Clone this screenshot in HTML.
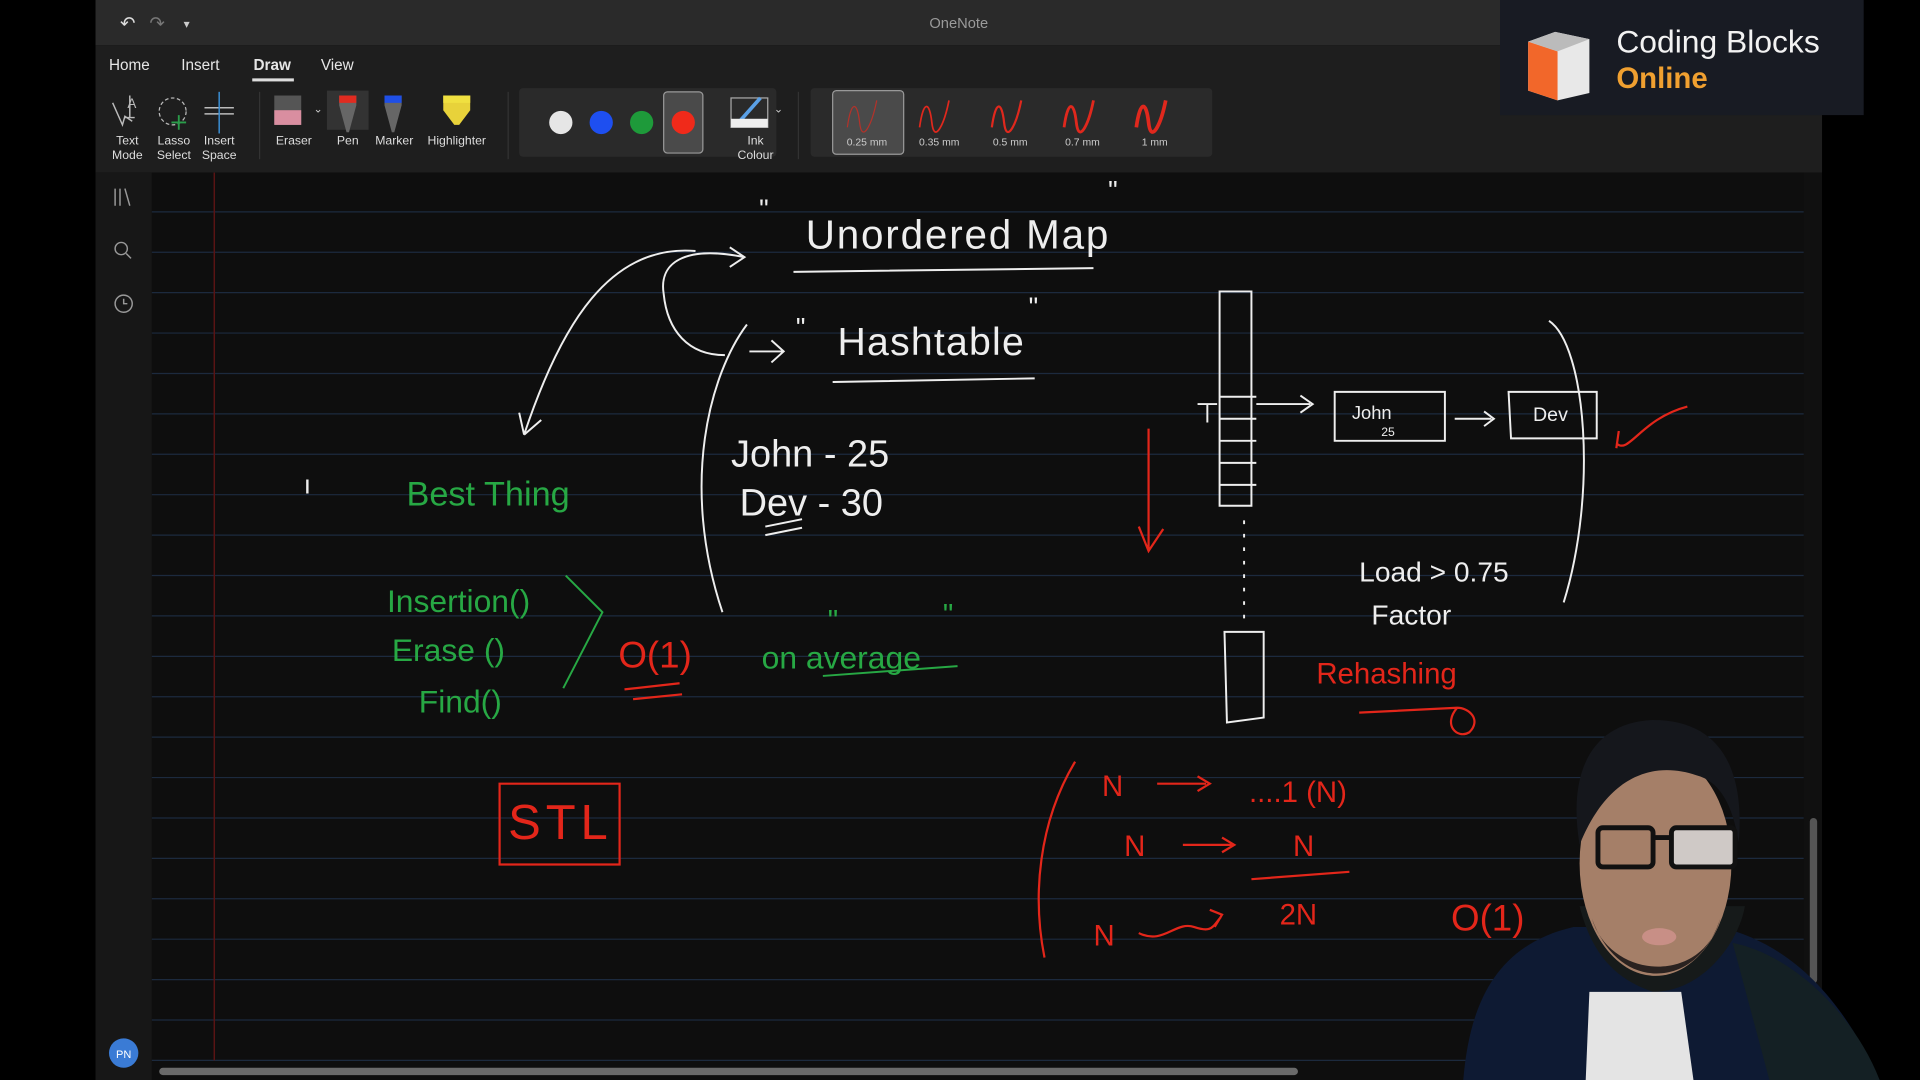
<!DOCTYPE html>
<html><head><meta charset="utf-8"><style>
html,body{margin:0;padding:0;background:#000;width:1920px;height:1080px;overflow:hidden}
svg{display:block}
.ui{font-family:"Liberation Sans",sans-serif}
</style></head><body>
<svg width="1920" height="1080" viewBox="0 0 1568 882" xmlns="http://www.w3.org/2000/svg">
<rect width="1568" height="882" fill="#000"/>
<!-- title bar -->
<rect x="78" y="0" width="1410" height="37" fill="#2a2a2a"/>
<text x="783" y="23" class="ui" fill="#9a9a9a" font-size="12" text-anchor="middle">OneNote</text>
<text x="98" y="24" class="ui" fill="#ddd" font-size="15">↶</text>
<text x="122" y="24" class="ui" fill="#777" font-size="15">↷</text>
<text x="150" y="23" class="ui" fill="#ccc" font-size="10">▾</text>
<!-- ribbon -->
<rect x="78" y="37" width="1410" height="104" fill="#1e1e1e"/>
<rect x="424" y="72" width="210" height="56" rx="3" fill="#2a2a2a"/>
<rect x="662" y="72" width="328" height="56" rx="3" fill="#2a2a2a"/>
<g class="ui" font-size="12.5" fill="#e6e6e6">
<text x="89" y="57">Home</text><text x="148" y="57">Insert</text><text x="207" y="57" font-weight="bold">Draw</text><text x="262" y="57">View</text>
</g>
<rect x="206" y="64" width="34" height="2.5" fill="#ddd"/>
<g class="ui" font-size="10" fill="#ddd" text-anchor="middle">
<text x="104" y="118">Text</text><text x="104" y="130">Mode</text>
<text x="142" y="118">Lasso</text><text x="142" y="130">Select</text>
<text x="179" y="118">Insert</text><text x="179" y="130">Space</text>
<text x="240" y="118">Eraser</text><text x="284" y="118">Pen</text><text x="322" y="118">Marker</text><text x="373" y="118">Highlighter</text>
<text x="617" y="118">Ink</text><text x="617" y="130">Colour</text>
</g>
<path d="M92 84l8 18 2-7 6 4 M106 78v18 M102 96h8" stroke="#bbb" fill="none" stroke-width="1.2"/>
<text x="104" y="88" class="ui" font-size="11" fill="#bbb">A</text>
<circle cx="141" cy="91" r="11" stroke="#bbb" fill="none" stroke-dasharray="3 2"/>
<path d="M146 94v12M140 100h12" stroke="#2a9d4a" stroke-width="1.5"/>
<path d="M167 88h24M167 93h24" stroke="#bbb" stroke-width="1.2"/><path d="M179 75v34" stroke="#3b8fd6" stroke-width="1.2"/>
<rect x="224" y="78" width="22" height="24" fill="#555"/><rect x="224" y="90" width="22" height="12" fill="#d98ea0"/>
<text x="256" y="92" class="ui" font-size="9" fill="#ccc">⌄</text>
<rect x="267" y="74" width="34" height="32" fill="#333"/>
<path d="M277 78h14v8l-6 22-2 0-6-22z" fill="#666"/><rect x="277" y="78" width="14" height="6" fill="#e02b20"/>
<path d="M314 78h14v8l-6 22-2 0-6-22z" fill="#666"/><rect x="314" y="78" width="14" height="6" fill="#1f4fe6"/>
<path d="M362 78h22v12l-9 12h-4l-9-12z" fill="#e8d23a"/><rect x="362" y="78" width="22" height="6" fill="#f0e040"/>
<line x1="212" y1="75" x2="212" y2="130" stroke="#333"/><line x1="415" y1="75" x2="415" y2="130" stroke="#333"/><line x1="652" y1="75" x2="652" y2="130" stroke="#333"/>
<circle cx="458" cy="100" r="9.5" fill="#e6e6e6"/><circle cx="491" cy="100" r="9.5" fill="#1e4ff0"/><circle cx="524" cy="100" r="9.5" fill="#1e9a3a"/>
<rect x="542" y="75" width="32" height="50" rx="3" fill="#4a4a4a" stroke="#999"/><circle cx="558" cy="100" r="9.5" fill="#f02a1a"/>
<rect x="597" y="80" width="30" height="24" fill="none" stroke="#aaa"/><path d="M605 98l16-18" stroke="#5aa0e6" stroke-width="3"/><rect x="597" y="97" width="30" height="7" fill="#eee"/>
<text x="632" y="92" class="ui" font-size="9" fill="#ccc">⌄</text>
<rect x="680" y="74" width="58" height="52" rx="3" fill="#4a4a4a" stroke="#999"/>
<g fill="none" stroke="#e0281d">
<path d="M692 104c3-22 8-22 10-4s10 2 14-18" stroke-width="1" opacity=".7"/>
<path d="M751 104c3-22 8-22 10-4s10 2 14-18" stroke-width="1.4"/>
<path d="M810 104c3-22 8-22 10-4s10 2 14-18" stroke-width="1.8"/>
<path d="M869 104c3-22 8-22 10-4s10 2 14-18" stroke-width="2.3"/>
<path d="M928 104c3-22 8-22 10-4s10 2 14-18" stroke-width="3"/>
</g>
<g class="ui" font-size="8.5" fill="#ccc" text-anchor="middle"><text x="708" y="119">0.25 mm</text><text x="767" y="119">0.35 mm</text><text x="825" y="119">0.5 mm</text><text x="884" y="119">0.7 mm</text><text x="943" y="119">1 mm</text></g>
<!-- logo -->
<rect x="1225" y="0" width="297" height="94" fill="#181b23"/>
<path d="M1248 34l22-8 28 6v44l-26 6-24-8z" fill="#e8e8e8"/>
<path d="M1248 34l24 8v40l-24-8z" fill="#f2672a"/><path d="M1248 34l22-8 28 6-26 10z" fill="#bbb"/>
<text x="1320" y="43" class="ui" font-size="26" fill="#f2f2f2">Coding Blocks</text>
<text x="1320" y="72" class="ui" font-size="24" font-weight="bold" fill="#f0a030">Online</text>
<!-- canvas -->
<rect x="78" y="141" width="1410" height="741" fill="#101010"/>
<rect x="78" y="141" width="46" height="741" fill="#171717"/>
<rect x="124" y="141" width="1349" height="741" fill="#0e0e0e"/>
<g stroke="#1c2a3e" stroke-width="1">
<line x1="124" y1="173" x2="1473" y2="173"/><line x1="124" y1="206" x2="1473" y2="206"/><line x1="124" y1="239" x2="1473" y2="239"/><line x1="124" y1="272" x2="1473" y2="272"/><line x1="124" y1="305" x2="1473" y2="305"/><line x1="124" y1="338" x2="1473" y2="338"/><line x1="124" y1="371" x2="1473" y2="371"/><line x1="124" y1="404" x2="1473" y2="404"/><line x1="124" y1="437" x2="1473" y2="437"/><line x1="124" y1="470" x2="1473" y2="470"/><line x1="124" y1="503" x2="1473" y2="503"/><line x1="124" y1="536" x2="1473" y2="536"/><line x1="124" y1="569" x2="1473" y2="569"/><line x1="124" y1="602" x2="1473" y2="602"/><line x1="124" y1="635" x2="1473" y2="635"/><line x1="124" y1="668" x2="1473" y2="668"/><line x1="124" y1="701" x2="1473" y2="701"/><line x1="124" y1="734" x2="1473" y2="734"/><line x1="124" y1="767" x2="1473" y2="767"/><line x1="124" y1="800" x2="1473" y2="800"/><line x1="124" y1="833" x2="1473" y2="833"/><line x1="124" y1="866" x2="1473" y2="866"/>
</g>
<line x1="175" y1="141" x2="175" y2="866" stroke="#5a1414" stroke-width="1.2"/>
<g stroke="#999" fill="none" stroke-width="1.2"><path d="M94 154v14M98 154v14M102 154l4 14"/><circle cx="99" cy="203" r="5"/><path d="M103 207l4 4"/><circle cx="101" cy="248" r="7"/><path d="M101 244v4h3"/></g>
<circle cx="101" cy="860" r="12" fill="#3a7bd5"/><text x="101" y="864" class="ui" font-size="9" fill="#fff" text-anchor="middle">PN</text>
<rect x="130" y="872" width="930" height="6" rx="3" fill="#6a6a6a"/>
<rect x="1478" y="668" width="6" height="135" rx="3" fill="#555"/>
<!-- white ink text -->
<g class="ui" fill="#eee">
<text x="658" y="203" font-size="33" letter-spacing="1.5">Unordered Map</text>
<text x="684" y="290" font-size="32" letter-spacing="1">Hashtable</text>
<text x="597" y="381" font-size="31">John - 25</text>
<text x="604" y="421" font-size="31">Dev - 30</text>
<text x="620" y="178" font-size="22">"</text><text x="905" y="163" font-size="22">"</text>
<text x="650" y="275" font-size="22">"</text><text x="840" y="258" font-size="22">"</text>
<text x="1110" y="475" font-size="23">Load &gt; 0.75</text>
<text x="1120" y="510" font-size="23">Factor</text>
<text x="1104" y="342" font-size="15">John</text><text x="1128" y="356" font-size="10">25</text>
<text x="1252" y="344" font-size="16">Dev</text>
<text x="248" y="403" font-size="22">ı</text>
</g>
<g fill="none" stroke="#eee" stroke-width="1.6">
<path d="M648 222l245-3M680 312l165-3"/>
<path d="M568 205c-70-6-110 60-140 150M428 355l-4-18M428 355l14-12"/>
<path d="M608 210c-50-10-70 5-66 30 3 30 20 50 50 50M596 202l12 8-12 8"/>
<path d="M610 265c-30 40-55 130-20 235M612 287h28M630 278l10 9-10 9"/>
<path d="M996 238h26v175h-26zM996 324h30M996 342h30M996 360h30M996 378h30M996 396h30M978 330h16M986 330v15"/>
<path d="M1016 425v85" stroke-dasharray="3 8"/>
<path d="M1000 516h32v70l-30 4zM1026 330h44M1062 323l10 7-10 7"/>
<path d="M1090 320h90v40h-90zM1188 342h30M1212 336l8 6-8 6M1232 320h72v38h-70z"/>
<path d="M1265 262c30 20 40 140 12 230"/>
<path d="M625 430l30-6M625 437l30-6"/>
</g>
<!-- green ink -->
<g class="ui" fill="#27a844">
<text x="332" y="413" font-size="28">Best Thing</text>
<text x="316" y="500" font-size="26">Insertion()</text>
<text x="320" y="540" font-size="26">Erase ()</text>
<text x="342" y="582" font-size="26">Find()</text>
<text x="622" y="546" font-size="26">on average</text>
<text x="676" y="515" font-size="24">"</text><text x="770" y="510" font-size="24">"</text>
</g>
<path d="M462 470l30 30-32 62M672 552l110-8" stroke="#27a844" fill="none" stroke-width="1.6"/>
<!-- red ink -->
<g class="ui" fill="#e3261a">
<text x="505" y="545" font-size="30">O(1)</text>
<text x="415" y="685" font-size="40" letter-spacing="4">STL</text>
<text x="1075" y="558" font-size="24">Rehashing</text>
<text x="900" y="650" font-size="24">N</text><text x="1020" y="655" font-size="24">....1  (N)</text>
<text x="918" y="699" font-size="24">N</text><text x="1056" y="699" font-size="24">N</text>
<text x="893" y="772" font-size="24">N</text><text x="1045" y="755" font-size="24">2N</text>
<text x="1185" y="760" font-size="30">O(1)</text>
</g>
<g fill="none" stroke="#e3261a" stroke-width="1.8">
<path d="M938 350v100M930 430l8 20 12-18"/>
<path d="M1320 362c10 10 20-20 58-30M1322 352l-2 14"/>
<path d="M510 563l45-5M517 571l40-4"/>
<path d="M408 640h98v66h-98z"/>
<path d="M1110 582l80-4c10 0 20 10 10 20-10 6-22-6-10-20"/>
<path d="M878 622c-30 50-35 110-25 160"/>
<path d="M945 640h40M978 634l10 6-10 6M966 690h40M998 684l10 6-10 6M1022 718l80-6"/>
<path d="M930 762c20 10 30-10 45-5s15 0 22-8M988 743l10 4-6 10"/>
</g>
<!-- webcam person -->
<path d="M1195 882c5-60 25-110 90-125h120c60 15 100 60 130 125z" fill="#0e1a33"/>
<path d="M1415 770c50 10 100 60 120 112h-90z" fill="#142024"/>
<path d="M1290 740c10 40 30 60 60 70 40 0 70-40 75-70z" fill="#161a1a"/>
<path d="M1298 810h75l10 72h-88z" fill="#e4e4e4"/>
<ellipse cx="1352" cy="705" rx="62" ry="92" fill="#a57f68"/>
<path d="M1290 690c-10-60 10-100 60-102 55 0 75 40 70 100-5-30-15-50-35-55-30-10-70-5-95 57z" fill="#15171c"/>
<path d="M1300 750c15 50 90 55 105 0-10 30-30 45-52 45s-42-15-53-45z" fill="#2a2220"/>
<rect x="1305" y="676" width="45" height="32" rx="4" fill="none" stroke="#111" stroke-width="4"/>
<rect x="1365" y="676" width="52" height="32" rx="4" fill="#cfc9c6" stroke="#111" stroke-width="4"/>
<path d="M1350 684h15" stroke="#111" stroke-width="4"/>
<ellipse cx="1355" cy="765" rx="14" ry="7" fill="#c88f86"/>
</svg>
</body></html>
